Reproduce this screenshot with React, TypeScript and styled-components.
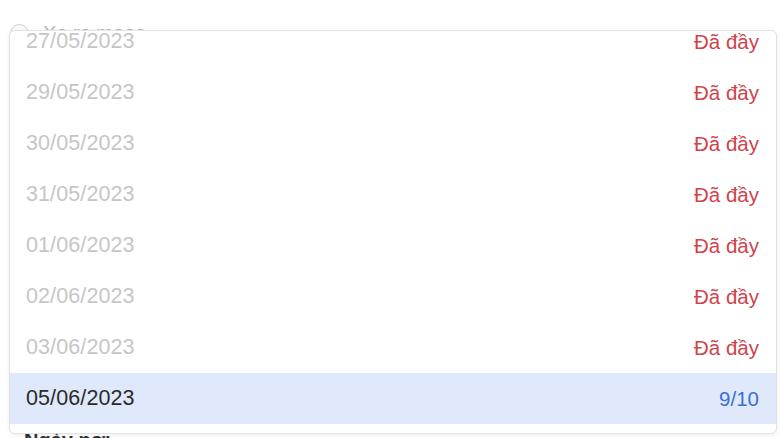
import * as React from 'react';
import styled, { createGlobalStyle } from 'styled-components';

const Global = createGlobalStyle`
  html, body {
    margin: 0;
    padding: 0;
    background: #ffffff;
    overflow: hidden;
  }
  body {
    font-family: 'Liberation Sans', Arial, sans-serif;
  }
`;

interface Slot {
  date: string;
  status: string;
  full: boolean;
}

const slots: Slot[] = [
  { date: '27/05/2023', status: 'Đã đầy', full: true },
  { date: '29/05/2023', status: 'Đã đầy', full: true },
  { date: '30/05/2023', status: 'Đã đầy', full: true },
  { date: '31/05/2023', status: 'Đã đầy', full: true },
  { date: '01/06/2023', status: 'Đã đầy', full: true },
  { date: '02/06/2023', status: 'Đã đầy', full: true },
  { date: '03/06/2023', status: 'Đã đầy', full: true },
  { date: '05/06/2023', status: '9/10', full: false },
];

export default function App() {
  const listRef = React.useRef<HTMLUListElement>(null);

  React.useLayoutEffect(() => {
    const el = listRef.current;
    if (el) el.scrollTop = el.scrollHeight;
  }, []);

  return (
    <Page>
      <Global />
      <Form>
        <RadioRow>
          <Radio />
          <RadioLabel>Xe ra mooc</RadioLabel>
        </RadioRow>
        <FieldLabel>Ngày nơi</FieldLabel>
      </Form>

      <Dropdown>
        <Options ref={listRef}>
          {slots.map((s) => (
            <Option key={s.date} selected={!s.full}>
              <DateText selected={!s.full}>{s.date}</DateText>
              <Status full={s.full}>{s.status}</Status>
            </Option>
          ))}
        </Options>
      </Dropdown>
    </Page>
  );
}

const Page = styled.div`
  position: relative;
  width: 780px;
  height: 438px;
  overflow: hidden;
`;

const Form = styled.div`
  display: flex;
  flex-direction: column;
  height: 100%;
  box-sizing: border-box;
  padding: 22px 0 0 10px;
`;

const RadioRow = styled.div`
  display: flex;
  align-items: center;
  gap: 14px;
`;

const Radio = styled.span`
  width: 17px;
  height: 17px;
  border-radius: 50%;
  border: 1px solid #cfcfcf;
  background: #fafafa;
`;

const RadioLabel = styled.span`
  font-size: 20px;
  color: #b8b8b8;
`;

const FieldLabel = styled.span`
  margin-top: auto;
  margin-bottom: -14px;
  padding-left: 14px;
  font-size: 20px;
  font-weight: 700;
  color: #333;
  line-height: 24px;
`;

const Dropdown = styled.div`
  position: absolute;
  left: 9px;
  top: 30px;
  width: 768px;
  height: 404px;
  box-sizing: border-box;
  background: #ffffff;
  border: 1px solid #e2e2e2;
  border-radius: 6px;
  box-shadow: 0 1px 4px rgba(0, 0, 0, 0.08);
  overflow: hidden;
`;

const Options = styled.ul`
  list-style: none;
  margin: 0;
  padding: 8px 0 9px;
  height: 100%;
  box-sizing: border-box;
  overflow-y: auto;
  scrollbar-width: none;
  &::-webkit-scrollbar {
    display: none;
  }
`;

const Option = styled.li<{ selected: boolean }>`
  display: flex;
  align-items: center;
  justify-content: space-between;
  height: 51px;
  padding: 0 17px 0 16px;
  font-size: 21.5px;
  letter-spacing: 0.1px;
  background: ${(p) => (p.selected ? '#dfe9fb' : 'transparent')};
`;

const DateText = styled.span<{ selected: boolean }>`
  color: ${(p) => (p.selected ? '#2b2b2b' : '#c6c6c6')};
`;

const Status = styled.span<{ full: boolean }>`
  font-size: 20.5px;
  letter-spacing: 0;
  color: ${(p) => (p.full ? '#cf434b' : '#3b6fd4')};
`;
